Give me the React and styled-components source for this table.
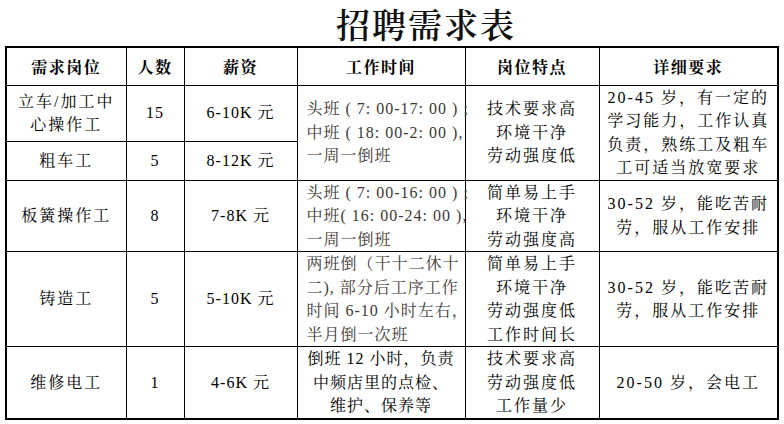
import React from "react";
import styled, { createGlobalStyle } from "styled-components";

const Global = createGlobalStyle`
  html, body { margin: 0; padding: 0; background: #fff; }
  body { width: 784px; height: 424px; overflow: hidden; }
`;

const BODY_FONT = `"Liberation Serif", "Noto Serif CJK SC", "Noto Sans CJK SC", serif`;

const Page = styled.div`
  padding: 0 0 0 5px;
  width: 772px;
  font-family: ${BODY_FONT};
  color: #000;
`;

const Title = styled.h1`
  margin: 0;
  height: 46px;
  display: flex;
  align-items: center;
  justify-content: center;
  padding-left: 70px;
  box-sizing: border-box;
  font-family: "AR PL UKai CN", "Noto Serif CJK SC", "Noto Sans CJK SC", serif;
  font-size: 34px;
  font-weight: 600;
  letter-spacing: 2px;
  color: #111;
`;

const Table = styled.table`
  width: 772px;
  border-collapse: collapse;
  table-layout: fixed;
  border: 2px solid #000;
`;

const Row = styled.tr`
  height: ${(p) => p.$h}px;
`;

const HeadCell = styled.th`
  border: 1px solid #000;
  padding: 0;
  font-size: 16px;
  font-weight: 700;
  letter-spacing: 1.5px;
  text-align: center;
  vertical-align: middle;
  font-family: "Noto Serif CJK SC", "Noto Sans CJK SC", serif;
`;

const Cell = styled.td`
  border: 1px solid #000;
  padding: ${(p) => (p.$align === "left" ? "0 0 0 9px" : "0")};
  font-size: 16px;
  line-height: 23.5px;
  letter-spacing: ${(p) => p.$spacing ?? 1}px;
  text-align: ${(p) => p.$align || "center"};
  vertical-align: middle;
  color: ${(p) => (p.$soft ? "#3d3733" : "#000")};
  white-space: nowrap;
`;

const Line = styled.span`
  display: block;
`;

const Lines = ({ items }) => items.map((t, i) => <Line key={i}>{t}</Line>);

const cols = [120, 58, 113, 168, 134, 179];

export default function App() {
  return (
    <>
      <Global />
      <Page>
        <Title>招聘需求表</Title>
        <Table>
          <colgroup>
            {cols.map((w, i) => (
              <col key={i} style={{ width: w }} />
            ))}
          </colgroup>
          <tbody>
            <Row $h={38}>
              <HeadCell>需求岗位</HeadCell>
              <HeadCell>人数</HeadCell>
              <HeadCell>薪资</HeadCell>
              <HeadCell>工作时间</HeadCell>
              <HeadCell>岗位特点</HeadCell>
              <HeadCell>详细要求</HeadCell>
            </Row>
            <Row $h={55}>
              <Cell $spacing={2}>
                <Lines items={["立车/加工中", "心操作工"]} />
              </Cell>
              <Cell>15</Cell>
              <Cell>6-10K 元</Cell>
              <Cell rowSpan={2} $align="left" $soft>
                <Lines items={["头班 ( 7:  00-17: 00 ) ;", "中班 ( 18: 00-2: 00 ),", "一周一倒班"]} />
              </Cell>
              <Cell rowSpan={2} $spacing={2}>
                <Lines items={["技术要求高", "环境干净", "劳动强度低"]} />
              </Cell>
              <Cell rowSpan={2} $spacing={2}>
                <Lines items={["20-45 岁，有一定的", "学习能力，工作认真", "负责，熟练工及粗车", "工可适当放宽要求"]} />
              </Cell>
            </Row>
            <Row $h={38}>
              <Cell $spacing={2}>粗车工</Cell>
              <Cell>5</Cell>
              <Cell>8-12K 元</Cell>
            </Row>
            <Row $h={71}>
              <Cell $spacing={2}>板簧操作工</Cell>
              <Cell>8</Cell>
              <Cell>7-8K 元</Cell>
              <Cell $align="left" $soft>
                <Lines items={["头班 ( 7:  00-16: 00 ) ;", "中班( 16: 00-24: 00 ),", "一周一倒班"]} />
              </Cell>
              <Cell $spacing={2}>
                <Lines items={["简单易上手", "环境干净", "劳动强度高"]} />
              </Cell>
              <Cell $spacing={2}>
                <Lines items={["30-52 岁，能吃苦耐", "劳，服从工作安排"]} />
              </Cell>
            </Row>
            <Row $h={93}>
              <Cell $spacing={2}>铸造工</Cell>
              <Cell>5</Cell>
              <Cell>5-10K 元</Cell>
              <Cell $align="left" $soft>
                <Lines items={["两班倒（干十二休十", "二), 部分后工序工作", "时间 6-10 小时左右，", "半月倒一次班"]} />
              </Cell>
              <Cell $spacing={2}>
                <Lines items={["简单易上手", "环境干净", "劳动强度低", "工作时间长"]} />
              </Cell>
              <Cell $spacing={2}>
                <Lines items={["30-52 岁，能吃苦耐", "劳，服从工作安排"]} />
              </Cell>
            </Row>
            <Row $h={71}>
              <Cell $spacing={2}>维修电工</Cell>
              <Cell>1</Cell>
              <Cell>4-6K 元</Cell>
              <Cell>
                <Lines items={["倒班 12 小时，负责", "中频店里的点检、", "维护、保养等"]} />
              </Cell>
              <Cell $spacing={2}>
                <Lines items={["技术要求高", "劳动强度低", "工作量少"]} />
              </Cell>
              <Cell $spacing={2}>20-50 岁，会电工</Cell>
            </Row>
          </tbody>
        </Table>
      </Page>
    </>
  );
}
